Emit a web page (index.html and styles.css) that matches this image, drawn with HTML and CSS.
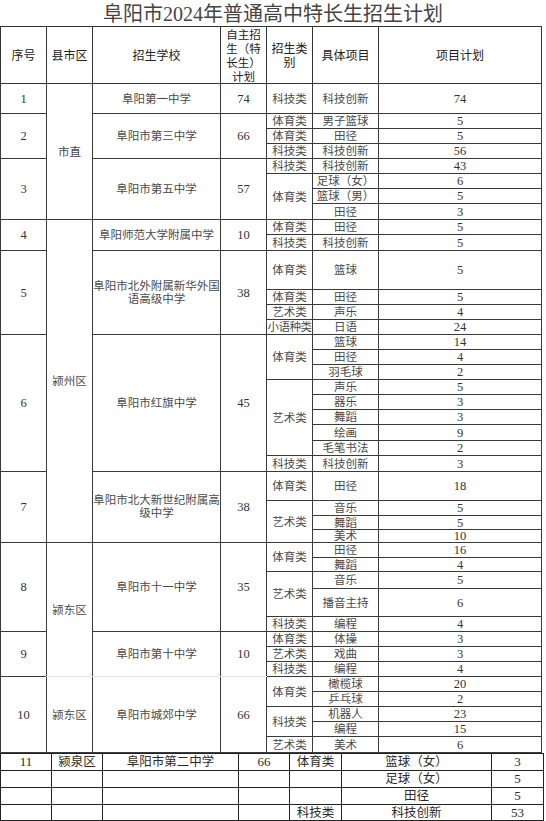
FILE: index.html
```html
<!DOCTYPE html>
<html lang="zh-CN">
<head>
<meta charset="utf-8">
<title>阜阳市2024年普通高中特长生招生计划</title>
<link rel="stylesheet" href="styles.css">
</head>
<body>
<h1 class="title">阜阳市2024年普通高中特长生招生计划</h1>
<table class="plan">
  <colgroup>
    <col class="c1"><col class="c2"><col class="c3"><col class="c4"><col class="c5"><col class="c6"><col class="c7">
  </colgroup>
  <thead>
    <tr class="hh">
      <th>序号</th><th>县市区</th><th>招生学校</th><th class="tight"><span class="ln">自主招</span><span class="ln">生（特</span><span class="ln">长生）</span><span class="ln">计划</span></th><th>招生类<br>别</th><th>具体项目</th><th>项目计划</th>
    </tr>
  </thead>
  <tbody>
    <tr class="h30"><td class="n">1</td><td rowspan="8">市直</td><td>阜阳第一中学</td><td class="n">74</td><td>科技类</td><td>科技创新</td><td class="n">74</td></tr>

    <tr class="h15"><td class="n" rowspan="3">2</td><td rowspan="3">阜阳市第三中学</td><td class="n" rowspan="3">66</td><td>体育类</td><td>男子篮球</td><td class="n">5</td></tr>
    <tr class="h15"><td>体育类</td><td>田径</td><td class="n">5</td></tr>
    <tr class="h15"><td>科技类</td><td>科技创新</td><td class="n">56</td></tr>

    <tr class="h15"><td class="n" rowspan="4">3</td><td rowspan="4">阜阳市第五中学</td><td class="n" rowspan="4">57</td><td>科技类</td><td>科技创新</td><td class="n">43</td></tr>
    <tr class="h15"><td rowspan="3">体育类</td><td>足球（女）</td><td class="n">6</td></tr>
    <tr class="h15"><td>篮球（男）</td><td class="n">5</td></tr>
    <tr class="h16"><td>田径</td><td class="n">3</td></tr>

    <tr class="h15"><td class="n" rowspan="2">4</td><td rowspan="19">颍州区</td><td rowspan="2">阜阳师范大学附属中学</td><td class="n" rowspan="2">10</td><td>体育类</td><td>田径</td><td class="n">5</td></tr>
    <tr class="h16"><td>科技类</td><td>科技创新</td><td class="n">5</td></tr>

    <tr class="h39"><td class="n" rowspan="4">5</td><td rowspan="4" class="two">阜阳市北外附属新华外国<br>语高级中学</td><td class="n" rowspan="4">38</td><td>体育类</td><td>篮球</td><td class="n">5</td></tr>
    <tr class="h15"><td>体育类</td><td>田径</td><td class="n">5</td></tr>
    <tr class="h15"><td>艺术类</td><td>声乐</td><td class="n">4</td></tr>
    <tr class="h15"><td class="cram">小语种类</td><td>日语</td><td class="n">24</td></tr>

    <tr class="h15"><td class="n" rowspan="9">6</td><td rowspan="9">阜阳市红旗中学</td><td class="n" rowspan="9">45</td><td rowspan="3">体育类</td><td>篮球</td><td class="n">14</td></tr>
    <tr class="h15"><td>田径</td><td class="n">4</td></tr>
    <tr class="h15"><td>羽毛球</td><td class="n">2</td></tr>
    <tr class="h15"><td rowspan="5">艺术类</td><td>声乐</td><td class="n">5</td></tr>
    <tr class="h15"><td>器乐</td><td class="n">3</td></tr>
    <tr class="h15"><td>舞蹈</td><td class="n">3</td></tr>
    <tr class="h16"><td>绘画</td><td class="n">9</td></tr>
    <tr class="h15"><td>毛笔书法</td><td class="n">2</td></tr>
    <tr class="h16"><td>科技类</td><td>科技创新</td><td class="n">3</td></tr>

    <tr class="h29"><td class="n" rowspan="4">7</td><td rowspan="4" class="two">阜阳市北大新世纪附属高<br>级中学</td><td class="n" rowspan="4">38</td><td>体育类</td><td>田径</td><td class="n">18</td></tr>
    <tr class="h15"><td rowspan="3">艺术类</td><td>音乐</td><td class="n">5</td></tr>
    <tr class="h14"><td>舞蹈</td><td class="n">5</td></tr>
    <tr class="h13"><td>美术</td><td class="n">10</td></tr>

    <tr class="h15"><td class="n" rowspan="5">8</td><td rowspan="8" class="fb">颍东区</td><td rowspan="5">阜阳市十一中学</td><td class="n" rowspan="5">35</td><td rowspan="2">体育类</td><td>田径</td><td class="n">16</td></tr>
    <tr class="h14"><td>舞蹈</td><td class="n">4</td></tr>
    <tr class="h17"><td rowspan="2">艺术类</td><td>音乐</td><td class="n">5</td></tr>
    <tr class="h28"><td>播音主持</td><td class="n">6</td></tr>
    <tr class="h15"><td>科技类</td><td>编程</td><td class="n">4</td></tr>

    <tr class="h15"><td class="n" rowspan="3">9</td><td rowspan="3" class="fb">阜阳市第十中学</td><td class="n fb" rowspan="3">10</td><td>体育类</td><td>体操</td><td class="n">3</td></tr>
    <tr class="h15"><td>艺术类</td><td>戏曲</td><td class="n">3</td></tr>
    <tr class="h15"><td>科技类</td><td>编程</td><td class="n">4</td></tr>

    <tr class="h15"><td class="n" rowspan="5">10</td><td rowspan="5">颍东区</td><td rowspan="5">阜阳市城郊中学</td><td class="n" rowspan="5">66</td><td rowspan="2">体育类</td><td>橄榄球</td><td class="n">20</td></tr>
    <tr class="h15"><td>乒乓球</td><td class="n">2</td></tr>
    <tr class="h15"><td rowspan="2">科技类</td><td>机器人</td><td class="n">23</td></tr>
    <tr class="h15"><td>编程</td><td class="n">15</td></tr>
    <tr class="h16"><td>艺术类</td><td>美术</td><td class="n">6</td></tr>
  </tbody>
</table>
<table class="plan2">
  <colgroup>
    <col class="d1"><col class="d2"><col class="d3"><col class="d4"><col class="d5"><col class="d6"><col class="d7">
  </colgroup>
  <tbody>
    <tr class="h17"><td class="n">11</td><td>颍泉区</td><td>阜阳市第二中学</td><td class="n">66</td><td>体育类</td><td>篮球（女）</td><td class="n">3</td></tr>
    <tr class="h17"><td></td><td></td><td></td><td></td><td></td><td>足球（女）</td><td class="n">5</td></tr>
    <tr class="h17"><td></td><td></td><td></td><td></td><td></td><td>田径</td><td class="n">5</td></tr>
    <tr class="h16"><td></td><td></td><td></td><td></td><td>科技类</td><td>科技创新</td><td class="n">53</td></tr>
    <tr class="h17"><td></td><td></td><td></td><td></td><td></td><td></td><td></td></tr>
  </tbody>
</table>
</body>
</html>
```

FILE: styles.css
```css
html, body {
  margin: 0;
  padding: 0;
  overflow: hidden;
  background: #ffffff;
}

.title {
  margin: 0;
  height: 26px;
  line-height: 28px;
  font-family: "Liberation Serif", "Noto Sans CJK SC", serif;
  font-weight: normal;
  font-size: 20px;
  text-align: center;
  color: #444444;
}

.plan, .plan2 {
  border-collapse: collapse;
  table-layout: fixed;
  font-family: "Liberation Serif", "Noto Sans CJK SC", serif;
}

.plan { width: 541px; }
.plan .c1 { width: 46px; }
.plan .c2 { width: 46px; }
.plan .c3 { width: 128px; }
.plan .c4 { width: 46px; }
.plan .c5 { width: 46px; }
.plan .c6 { width: 66px; }
.plan .c7 { width: 163px; }

.plan th {
  border: 1px solid #333333;
  padding: 0;
  font-family: "Noto Sans CJK SC", sans-serif;
  font-weight: normal;
  font-size: 12px;
  line-height: 14px;
  color: #222222;
  text-align: center;
  vertical-align: middle;
}

.plan th.tight {
  vertical-align: top;
  font-size: 11.5px;
}

.plan th .ln {
  display: block;
  height: 14px;
  line-height: 14px;
}

.plan td {
  border: 1px solid #3a3a3a;
  padding: 0;
  font-size: 11.5px;
  line-height: 12px;
  color: #4a4a4a;
  text-align: center;
  vertical-align: middle;
  white-space: nowrap;
  overflow: hidden;
}

.plan td.two { line-height: 13px; }
.plan td.cram { letter-spacing: -0.5px; }
.plan td.n { font-size: 12.5px; color: #333333; }
.plan td.fb { border-bottom-color: #e4e4e4; }

.hh { height: 56px; }
.h13 { height: 13px; }
.h14 { height: 14px; }
.h15 { height: 15px; }
.h16 { height: 16px; }
.h17 { height: 17px; }
.h28 { height: 28px; }
.h29 { height: 29px; }
.h30 { height: 30px; }
.h39 { height: 39px; }

.plan2 { width: 543px; }
.plan2 .d1 { width: 51px; }
.plan2 .d2 { width: 51px; }
.plan2 .d3 { width: 136px; }
.plan2 .d4 { width: 51px; }
.plan2 .d5 { width: 52px; }
.plan2 .d6 { width: 150px; }
.plan2 .d7 { width: 52px; }

.plan2 td {
  border: 1px solid #222222;
  padding: 0;
  font-size: 12.5px;
  line-height: 14px;
  color: #2a2a2a;
  text-align: center;
  vertical-align: middle;
  white-space: nowrap;
  overflow: hidden;
}

.plan2 td.n { font-size: 13px; }
```
